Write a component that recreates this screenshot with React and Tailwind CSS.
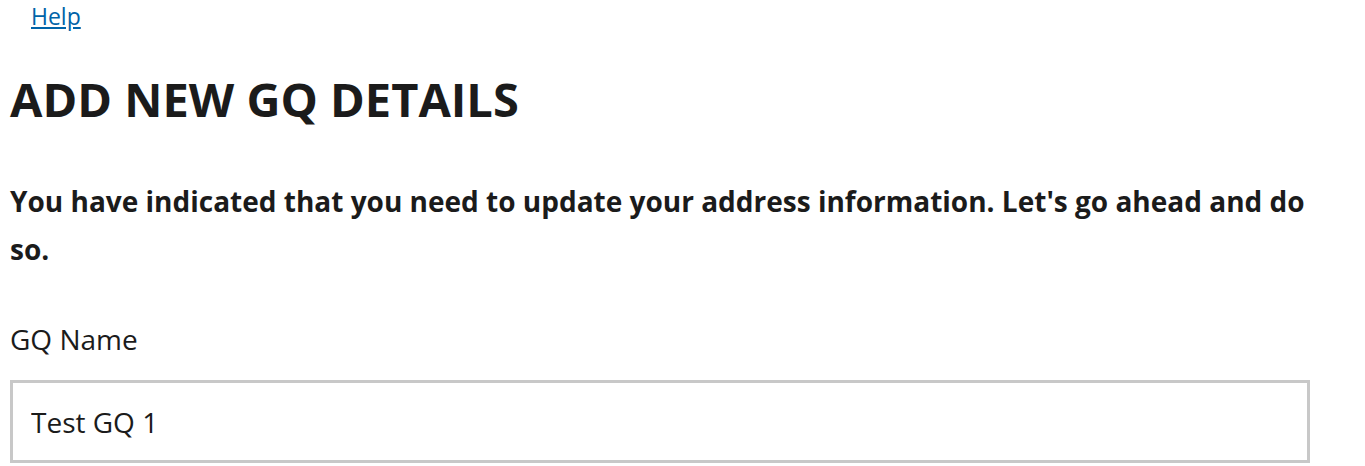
const App = () => {
  return (
    <div className="bg-white min-h-screen font-['Open_Sans',sans-serif] text-[#1b1b1b]">
      {/* Top nav */}
      <div className="pl-[31px] pt-[2px] h-[30px]">
        <a href="#" className="text-[23px] leading-[28px] text-[#0063a8] underline">
          Help
        </a>
      </div>

      <div className="px-[10px]">
        <h1 className="mt-[41px] text-[47px] leading-[56px] font-bold">
          ADD NEW GQ DETAILS
        </h1>

        <p className="mt-[50px] text-[28px] leading-[48px] font-bold max-w-[1320px]">
          You have indicated that you need to update your address information. Let's go ahead and do so.
        </p>

        <label className="block mt-[49px] text-[28px] leading-[34px]">GQ Name</label>

        <input
          type="text"
          defaultValue="Test GQ 1"
          className="mt-[24px] w-[1300px] h-[83px] border-[3px] border-[#c8c8c8] px-[18px] text-[28px] text-[#1b1b1b] outline-none"
        />
      </div>
    </div>
  );
};

export default App;
